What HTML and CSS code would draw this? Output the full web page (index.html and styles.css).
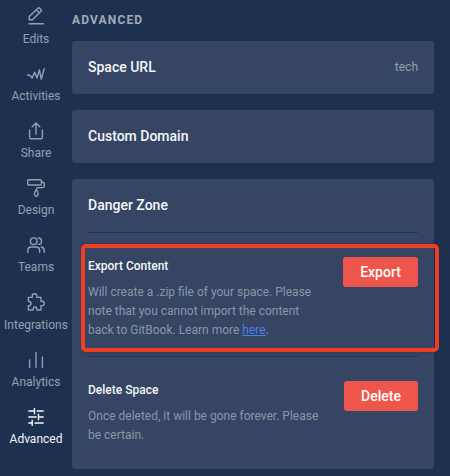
FILE: index.html
```html
<!DOCTYPE html>
<html lang="en">
<head>
<meta charset="utf-8">
<title>Advanced settings</title>
<link rel="stylesheet" href="styles.css">
</head>
<body>
<div class="app">
  <nav class="sidebar">
    <a class="nav-item"><svg class="icon" viewBox="0 0 18 18"><path d="M2 16.8H16.2M2.2 12.8V9.6L11 1.2Q12 .4 13 1.4L14 2.4Q14.8 3.3 14 4.2L5.4 12.8ZM9.3 2.9L12.3 5.8"/></svg><span>Edits</span></a>
    <a class="nav-item"><svg class="icon" viewBox="0 0 18 18"><path d="M.2 10.3H2.8L5.2 13L7.7 7.2L10 13L12.4 4.8L14.3 14.2L17.2 3.8"/></svg><span>Activities</span></a>
    <a class="nav-item"><svg class="icon" viewBox="0 0 18 18"><path d="M5.2 4.8L9 1L12.8 4.8M9 1V12.2M2.6 8V15.2Q2.6 16.8 4.2 16.8H13.8Q15.4 16.8 15.4 15.2V8"/></svg><span>Share</span></a>
    <a class="nav-item"><svg class="icon" viewBox="0 0 18 18"><path d="M1.5 .8H13.2Q14.4 .8 14.4 2V4.8Q14.4 6 13.2 6H1.8Q.7 6 .7 4.8V1.8Q.7 .8 1.8 .8M14.4 3.2H16Q17.3 3.2 17.3 4.5V7Q17.3 8.6 15.8 8.6H11.2Q9.3 8.6 9.3 11M9.3 11.2Q7.6 12.3 7.6 14.2V15.6Q7.6 17.3 9.3 17.3T11 15.6V14.2Q11 12.3 9.3 11.2Z"/></svg><span>Design</span></a>
    <a class="nav-item"><svg class="icon" viewBox="0 0 18 18"><circle cx="6.7" cy="5.2" r="3.3"/><path d="M.8 16.2V14.5Q.8 11 4.2 11H9.2Q12.6 11 12.6 14.5V16.2M11.3 2Q14.5 2 14.5 5.2T11.3 8.4M14.3 11Q17.2 11.5 17.2 14.5V16.2"/></svg><span>Teams</span></a>
    <a class="nav-item"><svg class="icon" viewBox="0 0 18 18"><path d="M1.4 4.4H5.2V3Q5.2 .8 7.5 .8T9.8 3V4.4H14V8.2H15.2Q17.2 8.2 17.2 10.4T15.2 12.6H14V17H9.8V15.5Q9.8 14 8 14T6.2 15.5V17H1.4V12.8Q4 12.8 4 10.5T1.4 8.2Z"/></svg><span>Integrations</span></a>
    <a class="nav-item"><svg class="icon" viewBox="0 0 18 18"><path d="M2.6 9V16.2M9 1.6V16.2M15.4 6V16.2"/></svg><span>Analytics</span></a>
    <a class="nav-item active"><svg class="icon" viewBox="0 0 18 18"><path d="M1.8 3H7.5M7.5 .3V5.8M10.2 3H16.2M1.8 9H9.2M11.5 6.2V11.8M11.5 9H16.2M1.8 15H5.2M5.2 12.2V17.8M8 15H16.2"/></svg><span>Advanced</span></a>
  </nav>
  <main class="content">
    <h1 class="heading">ADVANCED</h1>
    <section class="card row"><h2>Space URL</h2><span class="value">tech</span></section>
    <section class="card row"><h2>Custom Domain</h2></section>
    <section class="card danger">
      <h2>Danger Zone</h2>
      <div class="action export">
        <div class="copy"><h3>Export Content</h3><p>Will create a .zip file of your space. Please<br>note that you cannot import the content<br>back to GitBook. Learn more <a class="link" href="#">here</a>.</p></div>
        <button class="button">Export</button>
        <div class="highlight"></div>
      </div>
      <div class="action delete">
        <div class="copy"><h3>Delete Space</h3><p>Once deleted, it will be gone forever. Please<br>be certain.</p></div>
        <button class="button">Delete</button>
      </div>
    </section>
  </main>
</div>
</body>
</html>
```
FILE: styles.css
```css
* { box-sizing: border-box; }
body {
  margin: 0;
  background: #1e3050;
  font-family: Roboto, "Liberation Sans", sans-serif;
}
h1, h2, h3, p { margin: 0; }
.app { display: flex; width: 450px; height: 476px; overflow: hidden; }
.sidebar { width: 72px; flex: none; padding-top: 7.4px; }
.nav-item {
  display: flex;
  flex-direction: column;
  align-items: center;
  gap: 5.3px;
  height: 57.2px;
  color: #93a1b0;
  font-size: 12px;
  line-height: 16px;
}
.nav-item.active { color: #f5f7f9; }
.icon {
  width: 18px;
  height: 18px;
  flex: none;
  fill: none;
  stroke: currentColor;
  stroke-width: 1.4;
  stroke-linecap: round;
  stroke-linejoin: round;
}
.content { width: 362px; flex: none; }
.heading {
  height: 41px;
  padding-top: 12px;
  color: #9faab7;
  font-size: 12px;
  line-height: 16px;
  font-weight: 700;
  letter-spacing: 1.15px;
}
.card { background: #354563; border-radius: 3px; padding: 0 16px; margin-bottom: 16px; }
.row { display: flex; align-items: center; justify-content: space-between; height: 53px; padding-bottom: 1px; }
h2 { color: #f5f7f9; font-size: 14px; line-height: 20px; font-weight: 500; }
.value { color: #93a1b0; font-size: 12px; }
.danger { height: 290px; padding-top: 16px; }
.action {
  position: relative;
  display: flex;
  justify-content: space-between;
  align-items: flex-start;
  border-top: 1px solid #213453;
  padding-top: 24px;
}
.export { height: 124px; margin-top: 17px; }
.copy { white-space: nowrap; }
h3 { color: #f5f7f9; font-size: 12px; line-height: 18px; font-weight: 500; }
p { margin-top: 8px; color: #8997a8; font-size: 12px; line-height: 19px; }
.link { color: #467ff0; text-decoration: underline; }
.button {
  width: 75px;
  height: 30px;
  padding: 0;
  border: 0;
  border-radius: 3px;
  background: #ee554b;
  color: #fff;
  font: 500 14px/20px Roboto, "Liberation Sans", sans-serif;
}
.delete .button { width: 74px; }
.highlight {
  position: absolute;
  left: -7px;
  top: 11px;
  width: 358px;
  height: 108px;
  border: 4px solid #ef3e23;
  border-radius: 5px;
  box-shadow: 0 0 3px #202c3d80;
}
```
